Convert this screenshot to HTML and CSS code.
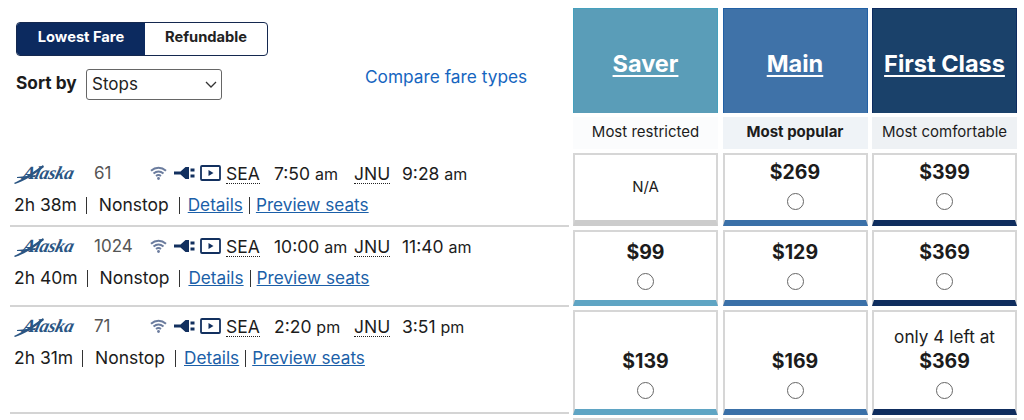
FILE: index.html
```html
<!DOCTYPE html>
<html lang="en">
<head>
<meta charset="utf-8">
<title>Flights</title>
<link rel="stylesheet" href="styles.css">
</head>
<body>
<svg class="defs" width="0" height="0" aria-hidden="true">
  <symbol id="wifi" viewBox="0 0 17 14">
    <path d="M1 4.800C5.500 .8 11.500 .8 16 4.800" fill="none" stroke="#6b7c9e" stroke-width="2"/>
    <path d="M3.500 7.500C6.500 5 10.500 5 13.500 7.500" fill="none" stroke="#6b7c9e" stroke-width="2"/>
    <path d="M6 10C7.500 8.800 9.500 8.800 11 10" fill="none" stroke="#6b7c9e" stroke-width="1.800"/>
    <circle cx="8.500" cy="12.500" r="1.400" fill="#6b7c9e"/>
  </symbol>
  <symbol id="plug" viewBox="0 0 21 14">
    <path d="M0 5.500h6.500L11.500 1h3.500v12h-3.500L6.500 8.500H0z" fill="#12305f"/>
    <path d="M16.500 2.500h4v3h-4zM16.500 8.500h4v3h-4z" fill="#12305f"/>
  </symbol>
  <symbol id="play" viewBox="0 0 21 16">
    <rect x="1" y="1" width="19" height="14" rx="1" fill="#fff" stroke="#12305f" stroke-width="1.800"/>
    <path d="M8.500 5l5 3-5 3z" fill="#12305f"/>
  </symbol>
  <symbol id="swoosh" viewBox="0 0 30 20">
    <path d="M0 19C8 15 18 9 29 1L30 3C20 11 10 17 1 20z" fill="#2a5583"/>
    <path d="M3 13C10 12 16 12 22 11L21 13C15 14 9 14 3 14z" fill="#2a5583"/>
  </symbol>
</svg>
<main class="board">
  <div class="controls">
    <div class="toggle">
      <span class="toggle-item toggle-on">Lowest Fare</span>
      <span class="toggle-item">Refundable</span>
    </div>
    <div class="sort-row">
      <label class="sort-label" for="sort">Sort by</label>
      <select class="sort-select" id="sort"><option>Stops</option></select>
      <a class="compare" href="#">Compare fare types</a>
    </div>
  </div>
  <div class="fare-head saver"><a href="#">Saver</a></div>
  <div class="fare-head main-fare"><a href="#">Main</a></div>
  <div class="fare-head first"><a href="#">First Class</a></div>

  <div class="fare-sub sub-saver">Most restricted</div>
  <div class="fare-sub sub-main">Most popular</div>
  <div class="fare-sub sub-first">Most comfortable</div>

  <div class="flight flight-first">
    <div class="line-one">
      <span class="logo"><svg class="swoosh"><use href="#swoosh"/></svg><span class="logo-text">Alaska</span></span><span class="num">61</span>
      <span class="amenities"><svg class="i-wifi"><use href="#wifi"/></svg><svg class="i-plug"><use href="#plug"/></svg><svg class="i-play"><use href="#play"/></svg></span>
      <span class="apt"><abbr>SEA</abbr></span><span class="time">7:50 <small>am</small></span>
      <span class="apt"><abbr>JNU</abbr></span><span class="time">9:28 <small>am</small></span>
    </div>
    <div class="line-two">2h 38m <i class="bar"></i> Nonstop <i class="bar bar-tight"></i><a href="#">Details</a><i class="bar bar-link"></i><a href="#">Preview seats</a></div>
  </div>
  <div class="cell na"><span class="na-text">N/A</span></div>
  <div class="cell main-cell"><b class="price">$269</b><input class="radio" type="radio" name="r1"></div>
  <div class="cell first-cell"><b class="price">$399</b><input class="radio" type="radio" name="r1"></div>

  <div class="flight">
    <div class="line-one">
      <span class="logo"><svg class="swoosh"><use href="#swoosh"/></svg><span class="logo-text">Alaska</span></span><span class="num">1024</span>
      <span class="amenities"><svg class="i-wifi"><use href="#wifi"/></svg><svg class="i-plug"><use href="#plug"/></svg><svg class="i-play"><use href="#play"/></svg></span>
      <span class="apt"><abbr>SEA</abbr></span><span class="time">10:00 <small>am</small></span>
      <span class="apt"><abbr>JNU</abbr></span><span class="time">11:40 <small>am</small></span>
    </div>
    <div class="line-two">2h 40m <i class="bar"></i> Nonstop <i class="bar bar-tight"></i><a href="#">Details</a><i class="bar bar-link"></i><a href="#">Preview seats</a></div>
  </div>
  <div class="cell saver-cell"><b class="price">$99</b><input class="radio" type="radio" name="r2"></div>
  <div class="cell main-cell"><b class="price">$129</b><input class="radio" type="radio" name="r2"></div>
  <div class="cell first-cell"><b class="price">$369</b><input class="radio" type="radio" name="r2"></div>

  <div class="flight flight-tall">
    <div class="line-one">
      <span class="logo"><svg class="swoosh"><use href="#swoosh"/></svg><span class="logo-text">Alaska</span></span><span class="num">71</span>
      <span class="amenities"><svg class="i-wifi"><use href="#wifi"/></svg><svg class="i-plug"><use href="#plug"/></svg><svg class="i-play"><use href="#play"/></svg></span>
      <span class="apt"><abbr>SEA</abbr></span><span class="time">2:20 <small>pm</small></span>
      <span class="apt"><abbr>JNU</abbr></span><span class="time">3:51 <small>pm</small></span>
    </div>
    <div class="line-two">2h 31m <i class="bar"></i> Nonstop <i class="bar bar-tight"></i><a href="#">Details</a><i class="bar bar-link"></i><a href="#">Preview seats</a></div>
  </div>
  <div class="cell saver-cell"><b class="price">$139</b><input class="radio" type="radio" name="r3"></div>
  <div class="cell main-cell"><b class="price">$169</b><input class="radio" type="radio" name="r3"></div>
  <div class="cell first-cell"><span class="left-note">only 4 left at</span><b class="price">$369</b><input class="radio" type="radio" name="r3"></div>

  <div class="flight-next"></div>
  <div class="cell-next"></div>
  <div class="cell-next"></div>
  <div class="cell-next"></div>
</main>
</body>
</html>
```
FILE: styles.css
```css
* { box-sizing: border-box; }
html, body { margin: 0; height: 420px; overflow: hidden; background: #fff; }
body { font-family: Inter, "Noto Sans", sans-serif; color: #1c1c1c; }
.defs { position: absolute; }
.board {
  display: grid;
  grid-template-columns: 558.500px 145px 145px 145px;
  grid-template-rows: 105px 32px 73px 76px 105px 1px;
  column-gap: 4.500px;
  row-gap: 4px;
  padding: 8px 0 0 10px;
}
.controls { grid-row: 1 / span 2; padding: 14px 0 0 6px; }
.toggle {
  display: flex;
  width: 252px;
  height: 34px;
  border: 1px solid #14284f;
  border-radius: 4px;
  overflow: hidden;
}
.toggle-item {
  flex: 1;
  display: flex;
  align-items: center;
  justify-content: center;
  padding-bottom: 4px;
  font-size: 14.700px;
  font-weight: 700;
  color: #222;
}
.toggle-on { flex: 0 0 128px; background: #0c2a5f; color: #fff; }
.sort-row { display: flex; align-items: center; margin-top: 13px; }
.sort-label { font-size: 17.300px; font-weight: 700; width: 70px; margin-top: -5px; }
.sort-select {
  appearance: none;
  width: 136px;
  height: 31px;
  font: 17px Inter, sans-serif;
  color: #222;
  background: #fff url("data:image/svg+xml,%3Csvg xmlns='http://www.w3.org/2000/svg' width='12' height='7'%3E%3Cpath d='M1 1l5 5 5-5' fill='none' stroke='%23333' stroke-width='1.300'/%3E%3C/svg%3E") no-repeat right 4px center;
  border: 1px solid #666;
  border-radius: 3px;
  padding: 0 0 2px 5px;
}
.compare { margin: -17px 0 0 143px; font-size: 17.300px; color: #1565c0; text-decoration: none; white-space: nowrap; }
.fare-head {
  display: flex;
  align-items: center;
  justify-content: center;
  padding-top: 5px;
  font-size: 23.500px;
  font-weight: 700;
  border: solid transparent;
  border-width: 1px 1px 0;
}
.fare-head a { color: #fff; text-decoration-thickness: 2px; text-underline-offset: 3px; white-space: nowrap; }
.saver { background: #5a9db8; border-color: #45a0bd; }
.main-fare { background: #3f72a8; border-color: #2160a5; }
.first { background: #1a416a; border-color: #0c2a5f; }
.fare-sub {
  display: flex;
  align-items: center;
  justify-content: center;
  padding-bottom: 3px;
  font-size: 15px;
}
.sub-saver { background: #fbfcfd; }
.sub-main { background: #eff3f7; font-weight: 700; }
.sub-first { background: #eef1f4; }
.flight {
  padding: 5px 0 0 4px;
  border-bottom: 2px solid #d4d4d4;
  margin-bottom: -1px;
}
.flight-first { padding-top: 9px; }
.flight-tall { margin-bottom: 1px; }
.line-one { display: flex; align-items: center; height: 22px; font-size: 17.500px; }
.logo { position: relative; width: 80px; height: 22px; }
.swoosh { position: absolute; left: 0; top: 2px; width: 30px; height: 20px; }
.logo-text {
  position: absolute;
  left: 9px;
  top: 1px;
  font: italic 700 18.500px "Liberation Serif", serif;
  letter-spacing: -0.300px;
  color: #2a5583;
  transform: skewX(-14deg);
}
.num { width: 56px; color: #555; font-size: 17px; }
.amenities { display: flex; align-items: center; width: 76px; }
.i-wifi { width: 17px; height: 14px; margin-right: 7px; }
.i-plug { width: 21px; height: 14px; margin-right: 5px; }
.i-play { width: 21px; height: 16px; }
.apt { width: 48px; }
.apt abbr { display: inline-block; line-height: 19px; border-bottom: 1px dotted #222; }
.time { width: 80px; white-space: nowrap; }
.time small { font-size: 16px; }
.line-two { margin-top: 10px; font-size: 17.500px; white-space: nowrap; }
.bar { display: inline-block; width: 1px; height: 17px; margin: 0 7px 0 4px; background: #333; vertical-align: -3px; }
.bar-tight { margin: 0 8px 0 5px; }
.bar-link { margin: 0 6px; }
.line-two a { color: #1b5fa8; font-size: 17.200px; }
.cell {
  display: flex;
  flex-direction: column;
  align-items: center;
  justify-content: flex-end;
  padding-bottom: 10px;
  border: 2px solid #d6d6d6;
  border-bottom: 6px solid #ccc;
}
.cell-next { margin-top: -1px; border-top: 2px solid #d6d6d6; }
.saver-cell { border-bottom-color: #5fa5c4; }
.main-cell { border-bottom-color: #3a70a8; }
.first-cell { border-bottom-color: #0f2d5e; }
.na { justify-content: center; padding-bottom: 0; }
.na-text { font-size: 15px; margin-top: -2px; }
.price { font-size: 19.500px; font-weight: 650; line-height: 24px; margin-bottom: 9px; }
.left-note { font-size: 17.200px; line-height: 24px; }
.radio {
  appearance: none;
  width: 17px;
  height: 17px;
  margin: 0;
  background: #fff;
  border: 1px solid #666;
  border-radius: 50%;
}
```
